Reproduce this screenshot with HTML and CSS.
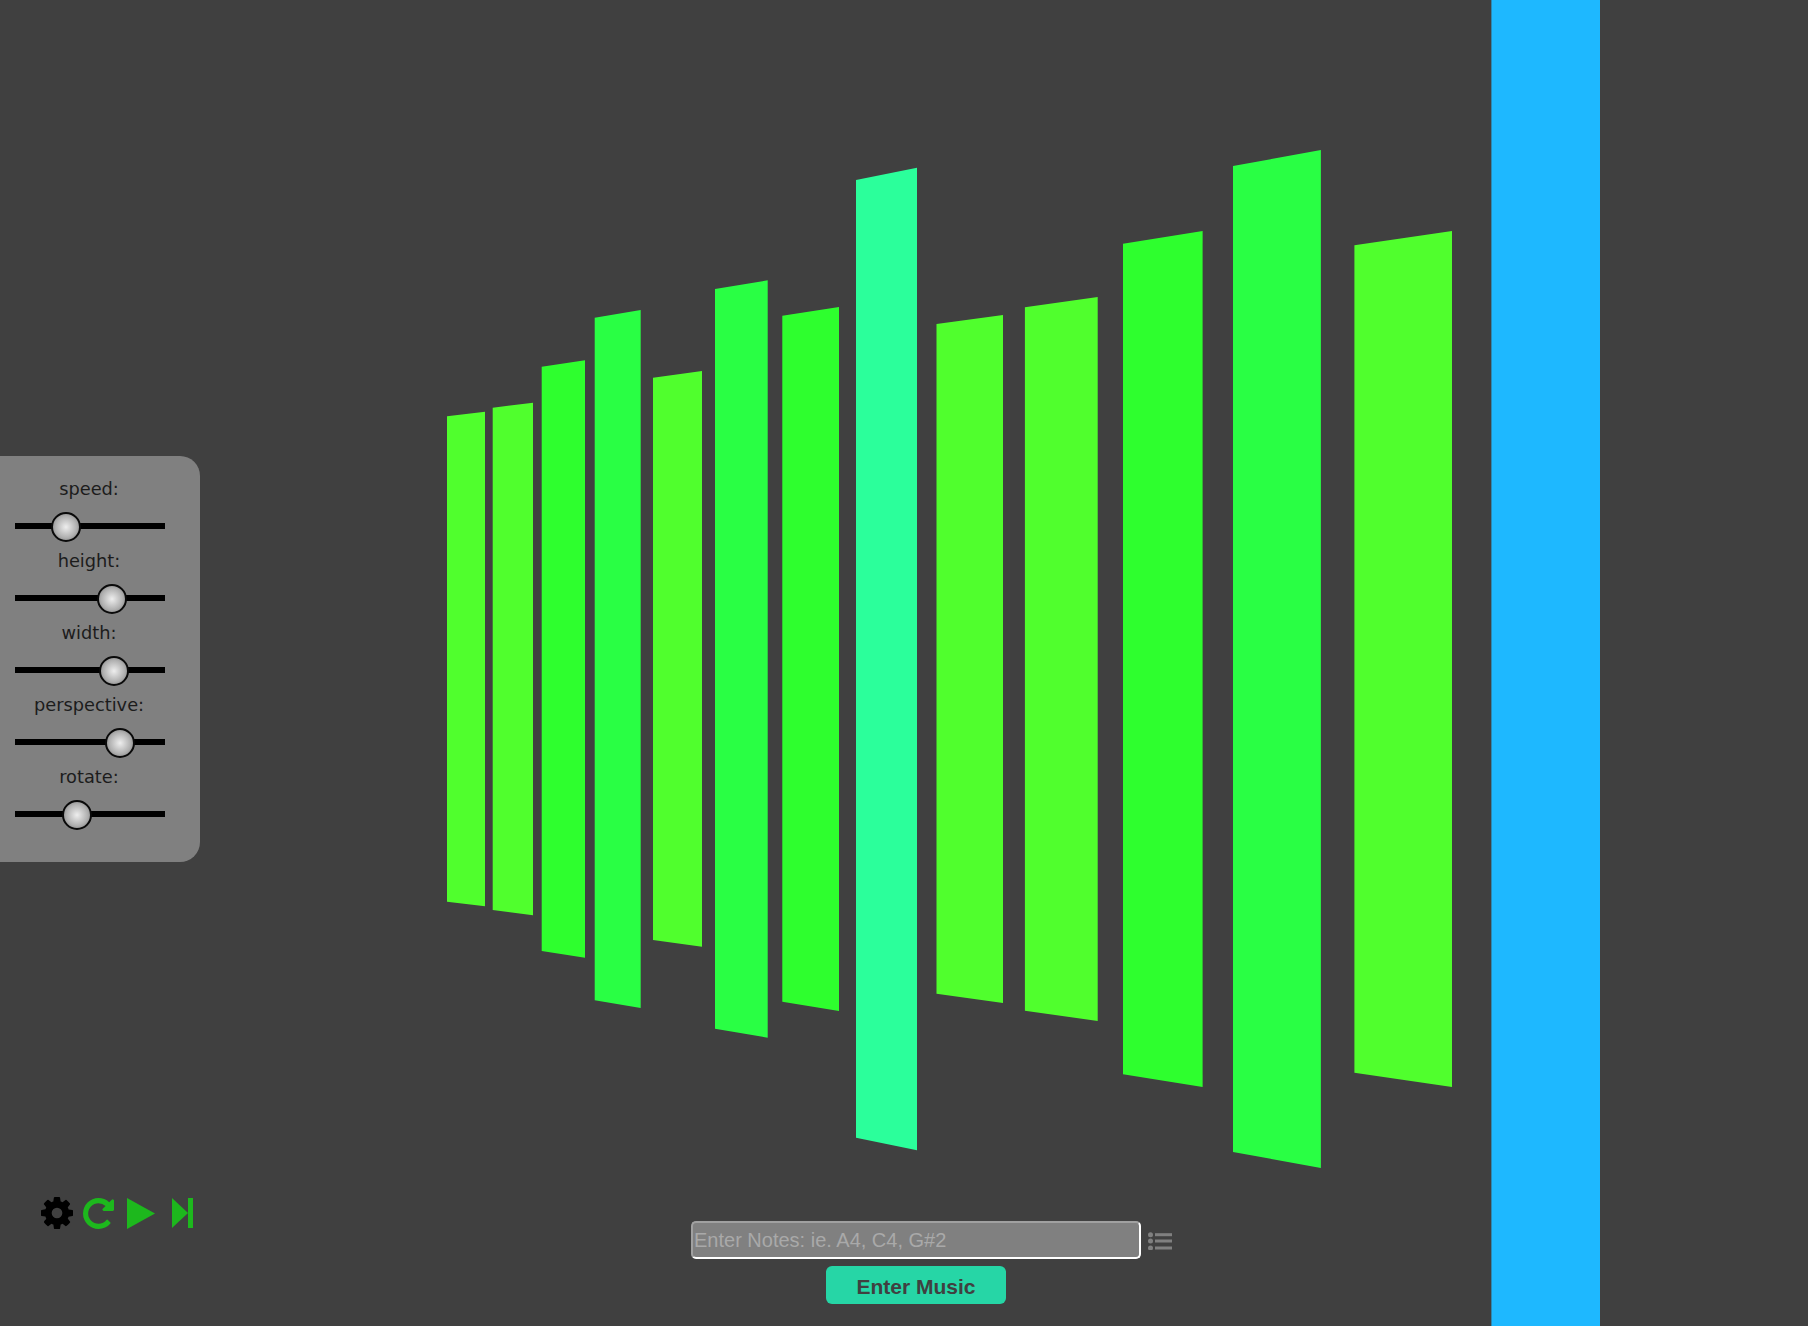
FILE: index.html
```html
<!DOCTYPE html>
<html lang="en">
<head>
<meta charset="utf-8">
<title>Music Visualizer</title>
<link rel="stylesheet" href="styles.css">
</head>
<body>
<main class="stage">
  <svg class="bars" viewBox="0 0 1808 1326" aria-hidden="true">
    <polygon class="lime" points="447,416.3 485,411.7 485,906.3 447,901.7"/>
    <polygon class="lime" points="492.7,407.7 533,402.7 533,915.3 492.7,910"/>
    <polygon class="green" points="541.7,366.7 585,360.3 585,957.7 541.7,951"/>
    <polygon class="spring" points="594.7,317.7 640.7,310 640.7,1008 594.7,1000.3"/>
    <polygon class="lime" points="653,377.7 702,371 702,946.7 653,940"/>
    <polygon class="spring" points="715,289 767.7,280.3 767.7,1037.7 715,1028.7"/>
    <polygon class="green" points="782.3,315.7 839,307 839,1011 782.3,1001.7"/>
    <polygon class="teal" points="856,180 917,167.7 917,1150.3 856,1137.7"/>
    <polygon class="lime" points="936.5,324 1003,315 1003,1003 936.5,993.7"/>
    <polygon class="lime" points="1024.9,307.3 1097.7,297 1097.7,1021 1024.9,1010.7"/>
    <polygon class="green" points="1123,243.7 1202.6,231 1202.6,1087 1123,1074.3"/>
    <polygon class="spring" points="1233,166 1320.9,150 1320.9,1168 1233,1152"/>
    <polygon class="lime" points="1354.4,245.3 1452,231 1452,1087 1354.4,1072.7"/>
    <rect class="blue" x="1491.4" y="0" width="108.6" height="1326"/>
  </svg>

  <form class="controls">
    <div class="control"><label class="control-label" for="speed">speed:</label><input class="slider" id="speed" type="range" min="0" max="100" step="any" value="29.75"></div>
    <div class="control"><label class="control-label" for="height">height:</label><input class="slider" id="height" type="range" min="0" max="100" step="any" value="68"></div>
    <div class="control"><label class="control-label" for="width">width:</label><input class="slider" id="width" type="range" min="0" max="100" step="any" value="69.75"></div>
    <div class="control"><label class="control-label" for="perspective">perspective:</label><input class="slider" id="perspective" type="range" min="0" max="100" step="any" value="75"></div>
    <div class="control"><label class="control-label" for="rotate">rotate:</label><input class="slider" id="rotate" type="range" min="0" max="100" step="any" value="39.4"></div>
  </form>

  <nav class="transport">
    <svg class="icon icon-gear" viewBox="128 128 1536 1536"><path d="M1152 896q0-106-75-181t-181-75-181 75-75 181 75 181 181 75 181-75 75-181zm512-109v222q0 12-8 23t-20 13l-185 28q-19 54-39 91 35 50 107 138 10 12 10 25t-9 23q-27 37-99 108t-94 71q-12 0-26-9l-138-108q-44 23-91 38-16 136-29 186-7 28-36 28h-222q-14 0-24.500-8.500t-11.500-21.500l-28-184q-49-16-90-37l-141 107q-10 9-25 9-14 0-25-11-126-114-165-168-7-10-7-23 0-12 8-23 15-21 51-66.500t54-70.500q-27-50-41-99l-183-27q-13-2-21-12.500t-8-23.500v-222q0-12 8-23t19-13l186-28q14-46 39-92-40-57-107-138-10-12-10-24 0-10 9-23 26-36 98.500-107.500t94.500-71.500q13 0 26 10l138 107q44-23 91-38 16-136 29-186 7-28 36-28h222q14 0 24.500 8.500t11.500 21.500l28 184q49 16 90 37l142-107q9-9 24-9 13 0 25 10 129 119 165 170 7 8 7 22 0 12-8 23-15 21-51 66.500t-54 70.500q26 50 41 98l183 28q13 2 21 12.500t8 23.500z"/></svg>
    <svg class="icon icon-repeat" viewBox="128 128 1536 1536"><path d="M1664 256v448q0 26-19 45t-45 19h-448q-42 0-59-40-17-39 14-69l138-138q-148-137-349-137-104 0-198.500 40.500t-163.500 109.500-109.500 163.500-40.500 198.500 40.500 198.500 109.500 163.500 163.500 109.500 198.500 40.500q119 0 225-52t179-147q7-10 23-12 15 0 25 9l137 138q9 8 9.500 20.500t-7.500 22.500q-109 132-264 204.500t-327 72.500q-156 0-298-61t-245-164-164-245-61-298 61-298 164-245 245-164 298-61q147 0 284.500 55.500t244.500 156.500l130-129q29-31 70-14 39 17 39 59z"/></svg>
    <svg class="icon icon-play" viewBox="0 0 28 31"><polygon points="0,0 28,15.5 0,31"/></svg>
    <svg class="icon icon-step" viewBox="0 0 21 30"><polygon points="0,0 16,15 0,30"/><rect x="16" y="0" width="5" height="30"/></svg>
  </nav>

  <form class="music-form">
    <div class="notes-row">
      <input class="notes-input" type="text" placeholder="Enter Notes: ie. A4, C4, G#2">
      <svg class="icon-list" viewBox="0 0 24 18"><circle cx="2.5" cy="2.7" r="2.5"/><circle cx="2.5" cy="9" r="2.5"/><circle cx="2.5" cy="16" r="2.5"/><rect x="7" y="1.2" width="17" height="3"/><rect x="7" y="7.5" width="17" height="3"/><rect x="7" y="14.5" width="17" height="3"/></svg>
    </div>
    <button class="enter-button" type="button">Enter Music</button>
  </form>
</main>
</body>
</html>
```

FILE: styles.css
```css
* { box-sizing: border-box; }

html, body {
  margin: 0;
  height: 100%;
  background: #404040;
}

.stage {
  position: relative;
  height: 1326px;
  overflow: hidden;
}

.bars {
  position: absolute;
  inset: 0;
  width: 1808px;
  height: 1326px;
}

.lime { fill: #50ff2d; }
.green { fill: #2eff2e; }
.spring { fill: #29ff44; }
.teal { fill: #2bff9b; }
.blue { fill: #1eb8ff; }

.controls {
  position: absolute;
  left: 0;
  top: 456px;
  width: 200px;
  height: 406px;
  padding: 21px 0 0 15px;
  background: #808080;
  border-radius: 0 20px 20px 0;
}

.control {
  display: flex;
  flex-direction: column;
  align-items: center;
  width: 150px;
  height: 72px;
}

.control-label {
  height: 24px;
  margin-right: 2px;
  font: 17.8px/24px "DejaVu Sans", Verdana, sans-serif;
  color: #1c1c1c;
}

.slider {
  -webkit-appearance: none;
  appearance: none;
  display: block;
  width: 150px;
  height: 30px;
  margin: 10px 0 0;
  padding: 0;
  background: transparent;
}

.slider::-webkit-slider-runnable-track {
  height: 6px;
  background: #000;
}

.slider::-webkit-slider-thumb {
  -webkit-appearance: none;
  appearance: none;
  width: 30px;
  height: 30px;
  margin-top: -11px;
  border: 2px solid #0a0a0a;
  border-radius: 50%;
  background: radial-gradient(circle, #eeeeee 0%, #b0b0b0 58%, #6e6e6e 100%);
}

.transport {
  position: absolute;
  left: 41px;
  top: 1197px;
  display: flex;
  align-items: center;
  height: 32px;
}

.icon { display: block; fill: #1db81d; }
.icon-gear { width: 32px; height: 32px; fill: #000; }
.icon-repeat { width: 31px; height: 31px; margin-left: 10px; }
.icon-play { width: 28px; height: 31px; margin-left: 13px; }
.icon-step { width: 21px; height: 30px; margin-left: 17px; }

.music-form {
  position: absolute;
  left: 691px;
  top: 1221px;
  display: flex;
  flex-direction: column;
  align-items: center;
  width: 450px;
  gap: 7px;
}

.notes-row {
  position: relative;
  width: 450px;
}

.notes-input {
  display: block;
  width: 450px;
  height: 38px;
  padding: 0 1px;
  border: 2px solid;
  border-color: #a0a0a0 #fff #fff #a0a0a0;
  border-radius: 5px;
  background: #808080;
  font: 20px "Liberation Sans", Arial, sans-serif;
  color: #222;
}

.notes-input::placeholder { color: #a9a9a9; opacity: 1; }

.icon-list {
  position: absolute;
  left: 457px;
  top: 11px;
  width: 24px;
  height: 18px;
  fill: #808080;
}

.enter-button {
  width: 180px;
  height: 38px;
  padding: 3px 0 0;
  border: 0;
  border-radius: 6px;
  background: #26d6a6;
  font: bold 21px "Liberation Sans", Arial, sans-serif;
  color: #404040;
}
```
